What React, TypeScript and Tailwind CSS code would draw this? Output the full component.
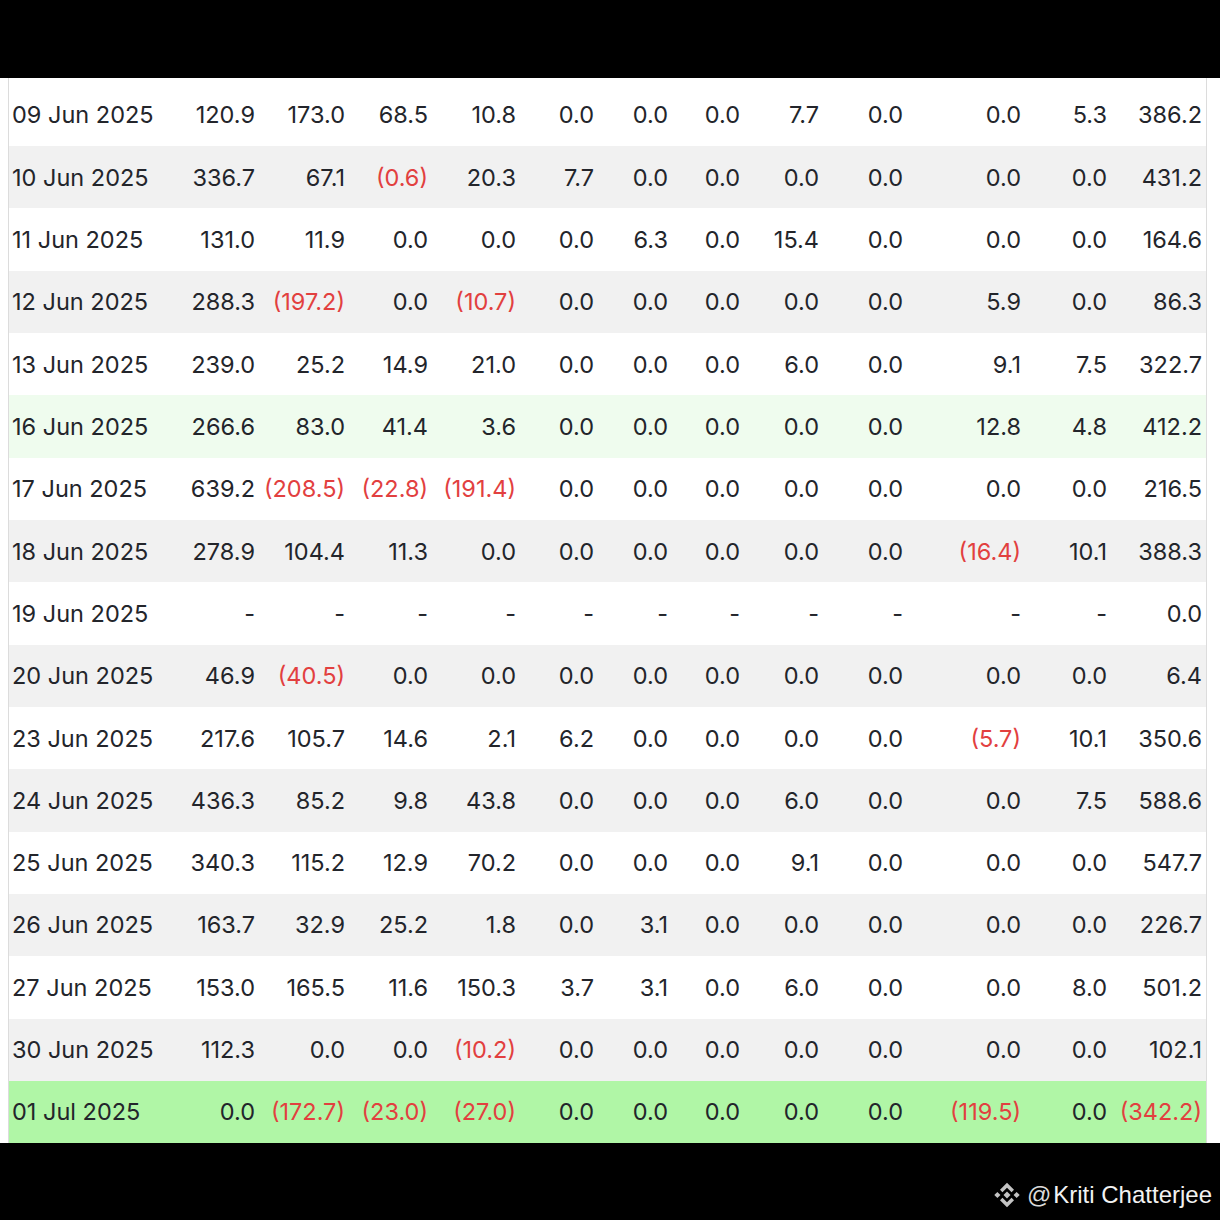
import React from "react";

type Row = { date: string; vals: string[]; bg: string };

const raw: [string, string][] = [
  ["09 Jun 2025", "120.9 173.0 68.5 10.8 0.0 0.0 0.0 7.7 0.0 0.0 5.3 386.2"],
  ["10 Jun 2025", "336.7 67.1 (0.6) 20.3 7.7 0.0 0.0 0.0 0.0 0.0 0.0 431.2"],
  ["11 Jun 2025", "131.0 11.9 0.0 0.0 0.0 6.3 0.0 15.4 0.0 0.0 0.0 164.6"],
  ["12 Jun 2025", "288.3 (197.2) 0.0 (10.7) 0.0 0.0 0.0 0.0 0.0 5.9 0.0 86.3"],
  ["13 Jun 2025", "239.0 25.2 14.9 21.0 0.0 0.0 0.0 6.0 0.0 9.1 7.5 322.7"],
  ["16 Jun 2025", "266.6 83.0 41.4 3.6 0.0 0.0 0.0 0.0 0.0 12.8 4.8 412.2"],
  ["17 Jun 2025", "639.2 (208.5) (22.8) (191.4) 0.0 0.0 0.0 0.0 0.0 0.0 0.0 216.5"],
  ["18 Jun 2025", "278.9 104.4 11.3 0.0 0.0 0.0 0.0 0.0 0.0 (16.4) 10.1 388.3"],
  ["19 Jun 2025", "- - - - - - - - - - - 0.0"],
  ["20 Jun 2025", "46.9 (40.5) 0.0 0.0 0.0 0.0 0.0 0.0 0.0 0.0 0.0 6.4"],
  ["23 Jun 2025", "217.6 105.7 14.6 2.1 6.2 0.0 0.0 0.0 0.0 (5.7) 10.1 350.6"],
  ["24 Jun 2025", "436.3 85.2 9.8 43.8 0.0 0.0 0.0 6.0 0.0 0.0 7.5 588.6"],
  ["25 Jun 2025", "340.3 115.2 12.9 70.2 0.0 0.0 0.0 9.1 0.0 0.0 0.0 547.7"],
  ["26 Jun 2025", "163.7 32.9 25.2 1.8 0.0 3.1 0.0 0.0 0.0 0.0 0.0 226.7"],
  ["27 Jun 2025", "153.0 165.5 11.6 150.3 3.7 3.1 0.0 6.0 0.0 0.0 8.0 501.2"],
  ["30 Jun 2025", "112.3 0.0 0.0 (10.2) 0.0 0.0 0.0 0.0 0.0 0.0 0.0 102.1"],
  ["01 Jul 2025", "0.0 (172.7) (23.0) (27.0) 0.0 0.0 0.0 0.0 0.0 (119.5) 0.0 (342.2)"],
];

const rows: Row[] = raw.map(([date, v], i) => {
  let bg = i % 2 === 0 ? "bg-white" : "bg-[#f1f1f1]";
  if (date === "16 Jun 2025") bg = "bg-[#effcee]";
  if (date === "01 Jul 2025") bg = "bg-[#b0f6a6]";
  return { date, vals: v.split(" "), bg };
});

function BinanceLogo() {
  return (
    <svg width="28" height="28" viewBox="0 0 32 32" fill="#c4c4c4">
      <polygon points="16,12 20,16 16,20 12,16" />
      <polygon points="5,12.5 8.5,16 5,19.5 1.5,16" />
      <polygon points="27,12.5 30.5,16 27,19.5 23.5,16" />
      <polygon points="16,2 24,10 21.2,12.8 16,7.6 10.8,12.8 8,10" />
      <polygon points="16,30 24,22 21.2,19.2 16,24.4 10.8,19.2 8,22" />
    </svg>
  );
}

export default function App() {
  return (
    <div
      className="w-[1220px] h-[1220px] bg-black flex flex-col"
      style={{ fontFamily: "Inter, 'Noto Sans', sans-serif" }}
    >
      <div className="h-[78px] shrink-0 bg-black" />
      <div className="h-[1065px] shrink-0 bg-white pl-[8px] pr-[13px]">
        <div className="h-full border-l border-r border-[#dcdcdc] pt-[5.7px]">
          {rows.map((r) => (
            <div
              key={r.date}
              className={`grid grid-cols-[160px_86px_90px_83px_88px_78px_74px_72px_79px_84px_118px_86px_95px] h-[62.33px] items-center text-[23.5px] text-[#23252b] ${r.bg}`}
            >
              <div className="pl-[3px] whitespace-nowrap">{r.date}</div>
              {r.vals.map((v, j) => (
                <div
                  key={j}
                  className={`text-right whitespace-nowrap ${
                    v.startsWith("(") ? "text-[#e2403f]" : ""
                  }`}
                >
                  {v}
                </div>
              ))}
            </div>
          ))}
        </div>
      </div>
      <div className="flex-1 flex items-center justify-end pr-[8px] pt-[26px]">
        <div className="flex items-center gap-[6px]">
          <BinanceLogo />
          <span
            className="text-[24px] text-[#f2f2f2] leading-none"
            style={{ fontFamily: "'Liberation Sans', Arial, sans-serif" }}
          >
            <span className="text-[#dadada] mr-[2px]">@</span>Kriti Chatterjee
          </span>
        </div>
      </div>
    </div>
  );
}
